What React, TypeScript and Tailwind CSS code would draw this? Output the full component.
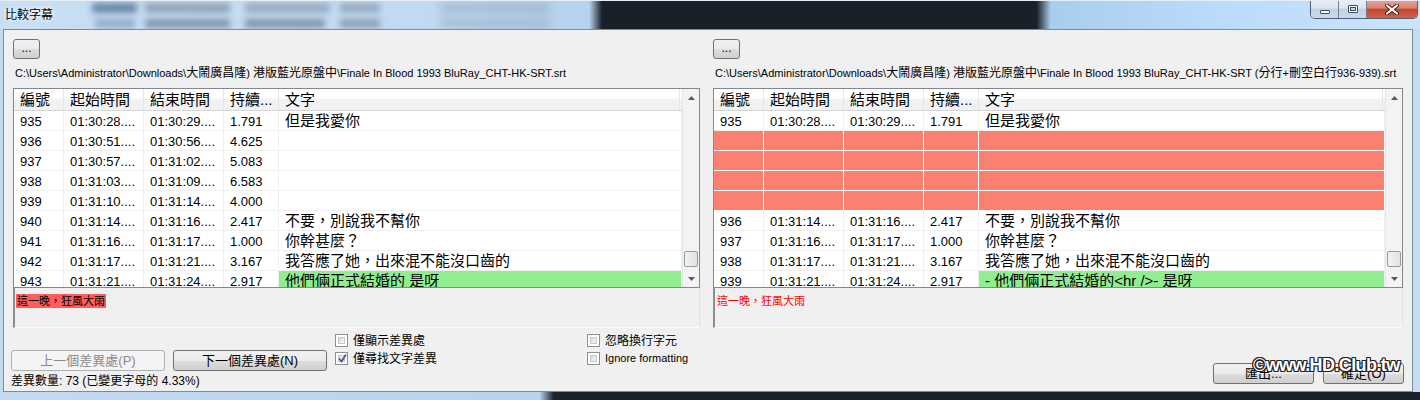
import React from "react";

type Kind = "n" | "red" | "green";
type Row = { n: string; s: string; e: string; d: string; t: string; k?: Kind };

const leftRows: Row[] = [
  { n: "935", s: "01:30:28....", e: "01:30:29....", d: "1.791", t: "但是我愛你" },
  { n: "936", s: "01:30:51....", e: "01:30:56....", d: "4.625", t: "" },
  { n: "937", s: "01:30:57....", e: "01:31:02....", d: "5.083", t: "" },
  { n: "938", s: "01:31:03....", e: "01:31:09....", d: "6.583", t: "" },
  { n: "939", s: "01:31:10....", e: "01:31:14....", d: "4.000", t: "" },
  { n: "940", s: "01:31:14....", e: "01:31:16....", d: "2.417", t: "不要，別說我不幫你" },
  { n: "941", s: "01:31:16....", e: "01:31:17....", d: "1.000", t: "你幹甚麼？" },
  { n: "942", s: "01:31:17....", e: "01:31:21....", d: "3.167", t: "我答應了她，出來混不能沒口齒的" },
  { n: "943", s: "01:31:21....", e: "01:31:24....", d: "2.917", t: "他們倆正式結婚的  是呀", k: "green" },
];

const rightRows: Row[] = [
  { n: "935", s: "01:30:28....", e: "01:30:29....", d: "1.791", t: "但是我愛你" },
  { n: "", s: "", e: "", d: "", t: "", k: "red" },
  { n: "", s: "", e: "", d: "", t: "", k: "red" },
  { n: "", s: "", e: "", d: "", t: "", k: "red" },
  { n: "", s: "", e: "", d: "", t: "", k: "red" },
  { n: "936", s: "01:31:14....", e: "01:31:16....", d: "2.417", t: "不要，別說我不幫你" },
  { n: "937", s: "01:31:16....", e: "01:31:17....", d: "1.000", t: "你幹甚麼？" },
  { n: "938", s: "01:31:17....", e: "01:31:21....", d: "3.167", t: "我答應了她，出來混不能沒口齒的" },
  { n: "939", s: "01:31:21....", e: "01:31:24....", d: "2.917", t: "- 他們倆正式結婚的<hr />- 是呀", k: "green" },
];

const colW = ["w-[50px]", "w-[80px]", "w-[80px]", "w-[55px]", "flex-1"];
const headers = ["編號", "起始時間", "結束時間", "持續...", "文字"];

function MixedPath({ text }: { text: string }) {
  const parts = text.split(/([\u3000-\u9fff\uff00-\uffef]+)/);
  return (
    <>
      {parts.map((p, i) =>
        /[\u3000-\u9fff\uff00-\uffef]/.test(p) ? (
          <span key={i} className="text-[12px]">
            {p}
          </span>
        ) : (
          <span key={i}>{p}</span>
        )
      )}
    </>
  );
}

function Arrow({ up }: { up: boolean }) {
  return (
    <div className="h-[17px] flex items-center justify-center">
      <svg width="7" height="4" viewBox="0 0 7 4">
        {up ? <path d="M0 4 L3.5 0 L7 4 Z" fill="#5a5a5a" /> : <path d="M0 0 L3.5 4 L7 0 Z" fill="#5a5a5a" />}
      </svg>
    </div>
  );
}

function ListView({ rows }: { rows: Row[] }) {
  return (
    <div className="h-[200px] border border-[#828790] bg-white flex overflow-hidden">
      <div className="flex-1 min-w-0 flex flex-col overflow-hidden">
        <div className="flex h-[22px] shrink-0 border-b border-[#d5d5d5] bg-[linear-gradient(#ffffff_0%,#ffffff_45%,#f1f2f4_46%,#f1f2f4_100%)]">
          {headers.map((h, i) => (
            <div
              key={i}
              className={`${colW[i]} h-full border-r border-[#e5e6e8] pl-[6px] pt-[2px] flex items-center text-[15px] text-black whitespace-nowrap overflow-hidden`}
            >
              {h}
            </div>
          ))}
          <div className="w-[2px]" />
        </div>
        {rows.map((r, ri) => {
          const vals = [r.n, r.s, r.e, r.d, r.t];
          return (
            <div key={ri} className="flex h-[20px] shrink-0">
              {vals.map((v, i) => {
                let cls = "bg-white border-[#f0f0f0]";
                if (r.k === "red") cls = "bg-[#fa8072] border-white";
                else if (r.k === "green" && i === 4) cls = "bg-[#90ee90] border-[#f0f0f0]";
                return (
                  <div
                    key={i}
                    className={`${colW[i]} ${cls} h-full border-r border-b pl-[6px] pt-[2px] flex items-center whitespace-nowrap overflow-hidden text-black ${
                      i === 4 ? "text-[15px]" : "text-[13px]"
                    }`}
                  >
                    {v}
                  </div>
                );
              })}
            </div>
          );
        })}
      </div>
      <div className="w-[17px] shrink-0 flex flex-col bg-[#f3f3f3] border-l border-[#e6e6e6]">
        <Arrow up />
        <div className="flex-1" />
        <div className="h-[16px] mx-[1px] mb-[3px] rounded-[2px] border border-[#9a9a9a] bg-[linear-gradient(90deg,#f2f2f2,#e2e2e2)]" />
        <Arrow up={false} />
      </div>
    </div>
  );
}

function Panel({ path, rows, note }: { path: string; rows: Row[]; note: React.ReactNode }) {
  return (
    <div className="flex flex-col">
      <div className="w-[27px] h-[20px] rounded-[3px] border border-[#707070] bg-[linear-gradient(#f2f2f2_0%,#ebebeb_50%,#dddddd_51%,#cfcfcf_100%)] flex items-center justify-center text-[12px] leading-none pb-[3px]">
        ...
      </div>
      <div className="mt-[7px] h-[15px] leading-[15px] text-[11px] text-black whitespace-nowrap pl-[2px]">
        <MixedPath text={path} />
      </div>
      <div className="mt-[7px]">
        <ListView rows={rows} />
      </div>
      <div className="h-[40px] border-l-2 border-l-[#8c8c8c] border-b border-b-[#fbfbfb] border-r border-r-[#e4e4e4] bg-[#f0f0f0] pl-[1px]">
        {note}
      </div>
    </div>
  );
}

function Button({ label, disabled, w }: { label: React.ReactNode; disabled?: boolean; w: string }) {
  return (
    <div
      className={`${w} h-[21px] rounded-[3px] border flex items-center justify-center text-[13px] ${
        disabled
          ? "border-[#adb2b5] bg-[#f4f4f4] text-[#8a8a8a]"
          : "border-[#707070] bg-[linear-gradient(#f2f2f2_0%,#ebebeb_50%,#dddddd_51%,#cfcfcf_100%)] text-black"
      }`}
    >
      {label}
    </div>
  );
}

function Check({ checked, label, small }: { checked?: boolean; label: string; small?: boolean }) {
  return (
    <div className="flex items-center gap-[5px] h-[13px]">
      <div className="w-[13px] h-[13px] border border-[#8e8f8f] bg-white p-[2px] relative">
        <div className="w-full h-full border border-[#c8c8c8] bg-[linear-gradient(135deg,#d8d8d8,#f7f7f7)]" />
        {checked && (
          <svg className="absolute left-[1px] top-[0px]" width="11" height="11" viewBox="0 0 11 11">
            <path d="M2 5.5 L4.5 8.5 L9 1.5" fill="none" stroke="#3f5a8f" strokeWidth="1.8" />
          </svg>
        )}
      </div>
      <span className={`${small ? "text-[11px]" : "text-[12px]"} text-black whitespace-nowrap leading-none`}>{label}</span>
    </div>
  );
}

export default function App() {
  return (
    <div className="w-[1420px] h-[400px] overflow-hidden relative bg-[#b9d6f1] font-['Liberation_Sans','Noto_Sans_CJK_TC',sans-serif] text-black">
      {/* Title bar */}
      <div className="relative h-[29px] flex justify-between overflow-hidden border-t border-[#e8eef5] bg-[linear-gradient(90deg,#c8def3_0%,#c2daf1_30%,#b6d2ee_41.5%,#19202a_42.4%,#19202a_73%,#a9cdec_74%,#b9dbfb_85%,#cbe4fb_100%)]">
        <div className="absolute left-[92px] top-[2px] w-[45px] h-[10px] bg-[#45648a] blur-[3px] opacity-70" />
        <div className="absolute left-[145px] top-[2px] w-[85px] h-[10px] bg-[#6d7f95] blur-[3px] opacity-60" />
        <div className="absolute left-[245px] top-[2px] w-[85px] h-[10px] bg-[#6d7f95] blur-[3px] opacity-50" />
        <div className="absolute left-[340px] top-[2px] w-[40px] h-[10px] bg-[#6d7f95] blur-[3px] opacity-50" />
        <div className="absolute left-[95px] top-[18px] w-[40px] h-[9px] bg-[#5c7ea6] blur-[3px] opacity-50" />
        <div className="absolute left-[145px] top-[18px] w-[85px] h-[9px] bg-[#55667c] blur-[3px] opacity-60" />
        <div className="absolute left-[245px] top-[18px] w-[80px] h-[9px] bg-[#55667c] blur-[3px] opacity-60" />
        <div className="absolute left-[340px] top-[18px] w-[40px] h-[9px] bg-[#55667c] blur-[3px] opacity-50" />
        <div className="absolute left-[440px] top-[2px] w-[110px] h-[10px] bg-[#7e8fa3] blur-[4px] opacity-40" />
        <div className="absolute left-[440px] top-[18px] w-[110px] h-[9px] bg-[#7e8fa3] blur-[4px] opacity-40" />
        <div className="relative pl-[5px] pt-[7px] text-[12px] leading-[15px] text-black [text-shadow:0_0_6px_#ffffff,0_0_3px_#ffffff]">
          比較字幕
        </div>
        <div className="relative mr-[2px] flex h-[19px] -mt-[1px] rounded-b-[5px] overflow-hidden border border-t-0 border-[#4e5f74]">
          <div className="w-[28px] h-full flex items-center justify-center border-r border-[#6f8097] bg-[linear-gradient(#e9eff6_0%,#dbe5f0_45%,#c2d2e4_50%,#cbdaea_100%)]">
            <div className="w-[10px] h-[4px] mt-[5px] bg-white border border-[#3c4b5e] rounded-[1px]" />
          </div>
          <div className="w-[28px] h-full flex items-center justify-center border-r border-[#6f8097] bg-[linear-gradient(#e9eff6_0%,#dbe5f0_45%,#c2d2e4_50%,#cbdaea_100%)]">
            <div className="w-[10px] h-[8px] border border-[#3c4b5e] bg-white p-[1px] rounded-[1px]">
              <div className="w-full h-full border border-[#3c4b5e] bg-[#c9d6e5]" />
            </div>
          </div>
          <div className="w-[50px] h-full flex items-center justify-center bg-[linear-gradient(#e7a699_0%,#d98474_45%,#c5462f_52%,#d0624c_100%)]">
            <svg width="14" height="11" viewBox="0 0 14 11">
              <path d="M2 1.5 L12 9.5 M12 1.5 L2 9.5" stroke="#4a1a12" strokeWidth="4" strokeLinecap="round" />
              <path d="M2 1.5 L12 9.5 M12 1.5 L2 9.5" stroke="#ffffff" strokeWidth="2.2" strokeLinecap="round" />
            </svg>
          </div>
        </div>
      </div>

      {/* Frame + client */}
      <div className="flex h-[363px]">
        <div className="w-[3px] bg-[#c3dbf1]" />
        <div className="w-[1410px] border-t border-l border-r border-b border-[#7c8a9c] bg-[#f0f0f0] flex flex-col">
          <div className="flex pl-[9px] pt-[9px] gap-[13px]">
            <div className="w-[687px]">
              <Panel
                path={"C:\\Users\\Administrator\\Downloads\\大鬧廣昌隆) 港版藍光原盤中\\Finale In Blood 1993 BluRay_CHT-HK-SRT.srt"}
                rows={leftRows}
                note={<span className="bg-[#ff5c5c] text-[11px] leading-[14px] text-black inline-block px-[1px] mt-[1px]">這一晚，狂風大雨</span>}
              />
            </div>
            <div className="w-[690px]">
              <Panel
                path={"C:\\Users\\Administrator\\Downloads\\大鬧廣昌隆) 港版藍光原盤中\\Finale In Blood 1993 BluRay_CHT-HK-SRT (分行+刪空白行936-939).srt"}
                rows={rightRows}
                note={<span className="text-[#ff0000] text-[11px] leading-[14px] inline-block px-[1px] mt-[1px]">這一晚，狂風大雨</span>}
              />
            </div>
          </div>
          <div className="flex-1 flex pl-[7px] pr-[8px]">
            <div className="w-[316px] flex flex-col pt-[22px]">
              <div className="flex gap-[8px]">
                <Button w="w-[154px]" disabled label="上一個差異處(P)" />
                <Button w="w-[154px]" label="下一個差異處(N)" />
              </div>
              <div className="mt-[3px] text-[12px] leading-[15px] whitespace-nowrap">差異數量: 73 (已變更字母的 4.33%)</div>
            </div>
            <div className="w-[252px] ml-[8px] pt-[6px] flex flex-col gap-[5px]">
              <Check label="僅顯示差異處" />
              <Check checked label="僅尋找文字差異" />
            </div>
            <div className="pt-[6px] flex flex-col gap-[5px]">
              <Check label="忽略換行字元" />
              <Check small label="Ignore formatting" />
            </div>
            <div className="flex-1" />
            <div className="flex gap-[9px] self-end mb-[7px]">
              <Button w="w-[101px]" label="匯出..." />
              <Button w="w-[81px]" label="確定(O)" />
            </div>
          </div>
        </div>
        <div className="w-[7px] bg-[#c3dcf3]" />
      </div>
      <div className="h-[8px] bg-[linear-gradient(90deg,#c3dbf1_0%,#b7d3ee_38%,#1b222b_39%,#1b222b_100%)]" />

      {/* watermark */}
      <div className="absolute left-[1253px] top-[356px] text-[18px] font-bold tracking-[-0.6px] text-white leading-none [text-shadow:1px_1px_0_#222,-1px_-1px_0_#222,1px_-1px_0_#222,-1px_1px_0_#222,0_1px_0_#222,0_-1px_0_#222,1px_0_0_#222,-1px_0_0_#222]">
        ©www.HD.Club.tw
      </div>
    </div>
  );
}
